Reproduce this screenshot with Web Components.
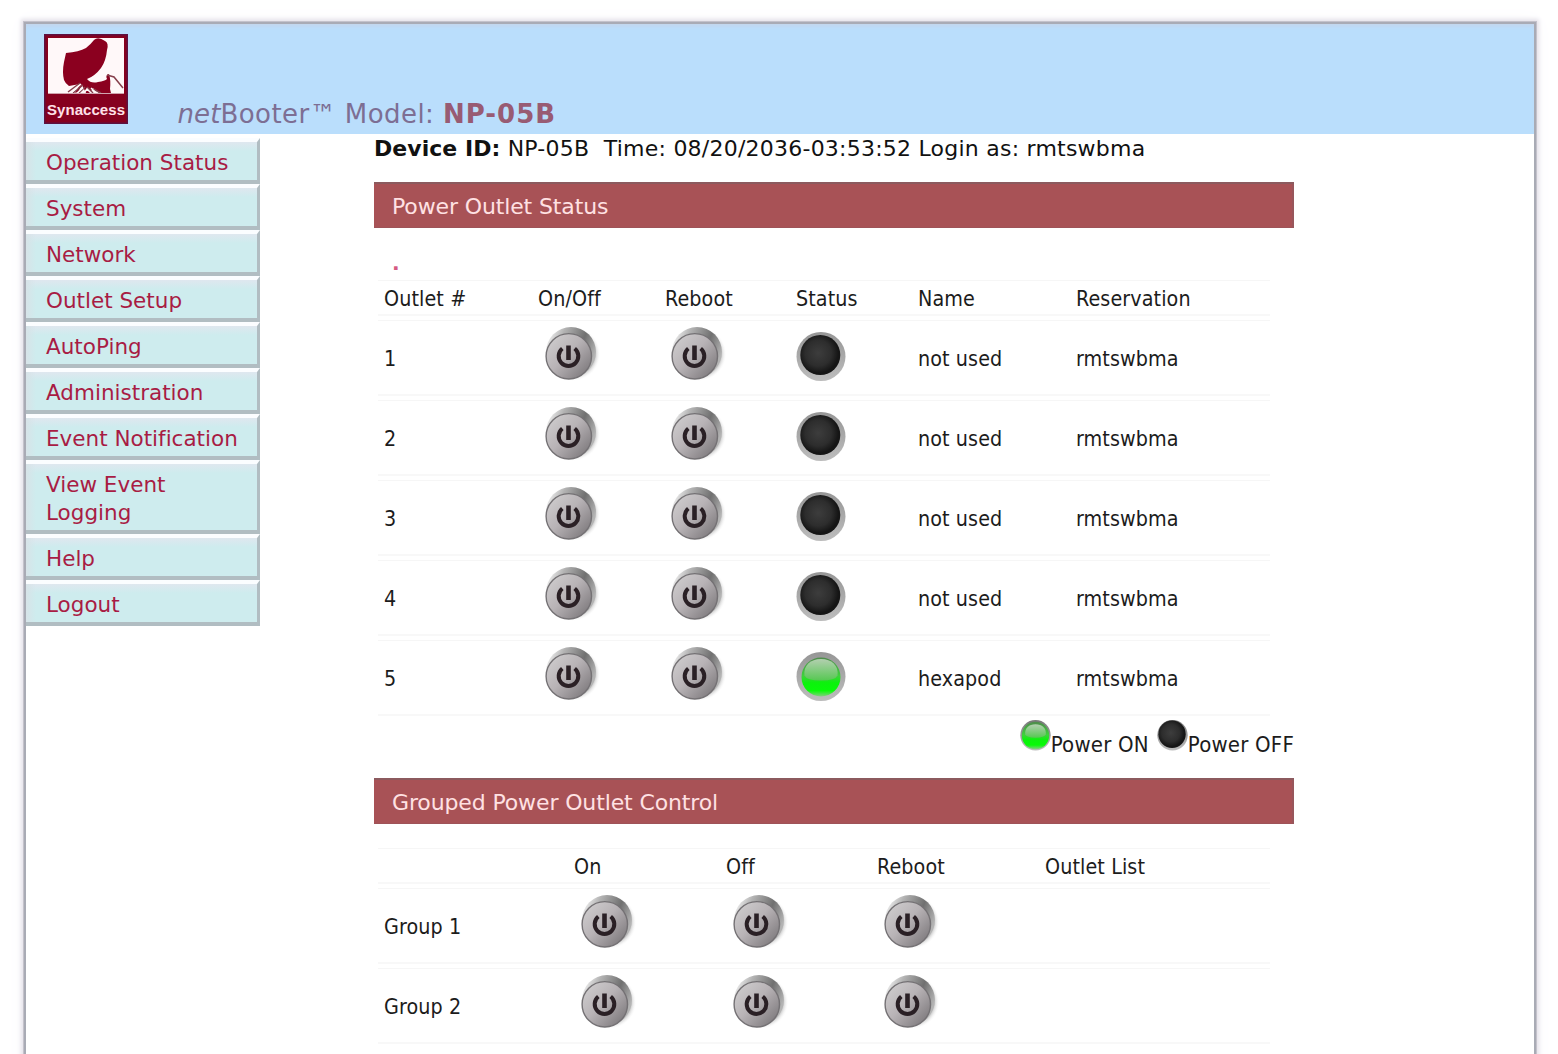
<!DOCTYPE html>
<html lang="en">
<head>
<meta charset="utf-8">
<title>netBooter</title>
<style>
html,body{margin:0;height:100%;overflow:hidden;background:#fff}
body{font-family:"DejaVu Sans",Verdana,sans-serif;color:#1c1c1c;font-size:22px;font-variant-ligatures:none}
</style>
</head>
<body>
<nb-app></nb-app>
<script>
const define=(name,html)=>customElements.define(name,class extends HTMLElement{
  constructor(){super();this.attachShadow({mode:'open'});}
  connectedCallback(){this.shadowRoot.innerHTML=typeof html==='function'?html(this):html;}
});

define('nb-logo',`<style>
:host{display:block;width:84px;height:90px}
svg{display:block}
</style>
<svg width="84" height="90" viewBox="0 0 84 90">
<rect width="84" height="90" fill="#86001f"/>
<path d="M0 0H84V90H0Z" fill="none" stroke="#5d1140" stroke-width="3"/>
<rect x="4" y="4" width="76" height="55" fill="#fff8f9"/>
<path d="M22 19Q35 18 42 14Q47 10 50 6Q54 2 61 7Q65 9 63 16Q62 27 57 34Q51 42 43 45Q47 50 54 48Q61 47 63 45Q61 41 65 40Q67 46 66 55L67 59H55L49 54L46 59H42L38 51L34 58L31 59L36 50L25 52Q21 49 20 46Q18 38 20 28Z" fill="#8b001f"/>
<path d="M24 58L36 49M29 59L39 51M35 59L41 53M43 53L49 59M49 55L57 59M63 41L70 43L79 54" fill="none" stroke="#86404d" stroke-width="1.500"/>
<path d="M27 59L37 50M33 59L39 54M40 59L43 55L47 59M52 59L47 54" fill="none" stroke="#fff8f9" stroke-width="1.500"/>
<path d="M4 59.500H80" stroke="#d0a3ae"/>
<text x="42" y="80.500" text-anchor="middle" textLength="78" lengthAdjust="spacing" font-family="Liberation Sans,Arial,sans-serif" font-weight="700" font-size="15" fill="#ffe0e8">Synaccess</text>
</svg>`);

define('nb-header',`<style>
:host{display:flex;height:110px;background:#badefc;box-sizing:border-box;padding:10px 0 0 18px;gap:49.500px;align-items:flex-start;box-shadow:inset 0 4px 4px -2px #c4d4ea}
h1{margin:64px 0 0;font-size:26px;line-height:32px;font-weight:400;color:#7d6e93;letter-spacing:.44px;white-space:pre}
b{color:#985b73;letter-spacing:1px}
i{letter-spacing:.1px}
</style><nb-logo></nb-logo><h1><i>net</i>Booter™ Model: <b>NP-05B</b></h1>`);

define('nb-menu-item',`<style>
:host{display:block;box-sizing:border-box;width:234px;padding:7px 10px 3px 20px;border-style:solid;border-width:4px 3px 4px 0;border-color:#fbfdff #b1bdc2 #b1bdc2;background:linear-gradient(90deg,#d7e3e8,transparent 10px),linear-gradient(#dfe7ef,#ceecee 9px);color:#a81c44;font-size:21.500px;line-height:28px}
</style><slot></slot>`);

define('nb-menu',`<style>:host{display:flex;flex-direction:column;width:234px;padding-top:4px}</style><slot></slot>`);

define('nb-bar',`<style>
:host{display:block;box-sizing:border-box;height:46px;padding-left:18px;line-height:50px;background:#a85256;color:#ffe1e3;font-size:22px;letter-spacing:-.13px;box-shadow:inset 0 2px #8c5a5e,inset -2px 0 #98565b,inset 0 -1px #9e5358}
</style><slot></slot>`);

define('nb-power',`<style>:host{display:block;width:56px;height:56px}svg{display:block}</style>
<svg width="56" height="56" viewBox="0 0 56 56">
<defs>
<linearGradient id="a" x1="0" y1=".1" x2="1" y2=".5"><stop offset="0" stop-color="#fff"/><stop offset=".3" stop-color="#b4b4b4"/><stop offset=".7" stop-color="#707070"/><stop offset="1" stop-color="#b4b4b4"/></linearGradient>
<linearGradient id="b" x1="0" y1=".15" x2=".8" y2=".9"><stop offset="0" stop-color="#cfcdce"/><stop offset=".5" stop-color="#b8b3b6"/><stop offset="1" stop-color="#858184"/></linearGradient>
<radialGradient id="c"><stop offset=".75" stop-color="#aaa"/><stop offset="1" stop-color="#fff" stop-opacity="0"/></radialGradient>
</defs>
<circle cx="28.500" cy="27" r="27" fill="url(#c)"/>
<circle cx="26" cy="25" r="25" fill="url(#a)"/>
<circle cx="23.800" cy="29.300" r="22.700" fill="url(#b)" stroke="#747174" stroke-width="1.400"/>
<path d="M17.300 21.500A9.800 9.800 0 1 0 29.700 21.500" fill="none" stroke="#2a2025" stroke-width="4"/>
<path d="M23.500 18.500V33" stroke="#2a2025" stroke-width="4.600"/>
</svg>`);

define('nb-led',el=>{
 const s=+(el.getAttribute('size')||50),on=el.hasAttribute('on');
 return `<style>:host{display:block;width:${s}px;height:${s}px}svg{display:block}</style>
<svg width="${s}" height="${s}" viewBox="0 0 50 50">
<defs>
<linearGradient id="r" x1="0" y1="0" x2="0" y2="1"><stop offset="0" stop-color="${s<50?'#777':'#969696'}"/><stop offset="1" stop-color="#bdbdbd"/></linearGradient>
<radialGradient id="k" cx=".45" cy=".45"><stop offset="0" stop-color="#3d3d3d"/><stop offset=".65" stop-color="#2d2d2d"/><stop offset="1" stop-color="#151515"/></radialGradient>
<linearGradient id="g" x1="0" y1="0" x2="0" y2="1"><stop offset="0" stop-color="#4f8b4c"/><stop offset=".48" stop-color="#3ed23c"/><stop offset=".65" stop-color="#0cf20c"/><stop offset=".85" stop-color="#08fa08"/><stop offset="1" stop-color="#83cf80"/></linearGradient>
<linearGradient id="h" x1="0" y1="0" x2="0" y2="1"><stop offset="0" stop-color="#b3cfb0"/><stop offset="1" stop-color="#57c853"/></linearGradient>
</defs>
<circle cx="25" cy="24.500" r="24.500" fill="url(#r)"/>
${on?`<circle cx="25" cy="25" r="${s<50?22:19.500}" fill="url(#g)"/><path d="M8.500 23.500C7 13.500 14.500 7 25 7S43 13.500 41.500 23.500Q39.500 28.500 25 28.500T8.500 23.500Z" fill="url(#h)"/>`
:`<circle cx="24.300" cy="23" r="${s<50?22:20}" fill="url(#k)"/>`}
</svg>`;});

define('nb-row',`<style>
:host{display:grid;grid-template-columns:var(--cols);width:892px;box-sizing:border-box;height:76px;border-top:1px solid #f6f6f6;border-bottom:2px solid #f8f8f8;padding-left:6px;align-items:center}
:host([head]){height:36px}
</style><slot></slot>`);

const cell=s=>`<div class="t">${s}</div>`;
const css=`<style>
:host{display:flex;flex-direction:column;gap:4px;width:896px;padding-left:4px;box-sizing:border-box;font-family:"DejaVu Sans Condensed","DejaVu Sans",sans-serif;font-stretch:condensed;font-size:21.300px;letter-spacing:.1px;color:#1c1c1c}
.t{white-space:pre;line-height:26px;padding-top:2px}
.i{align-self:start}
</style>`;
define('nb-outlets',`${css}<style>:host{--cols:154px 127px 131px 122px 158px 1fr}.p{margin:6px 0 0 7px}.l{margin:11px 0 0 0}.q{margin-left:6px}</style>
<nb-row head>${['Outlet #','On/Off','Reboot','Status','Name','Reservation'].map(cell).join('')}</nb-row>`+
[1,2,3,4,5].map(n=>`<nb-row>${cell(n)}<nb-power class="i p"></nb-power><nb-power class="i p q"></nb-power><nb-led class="i l" ${n==5?'on':''}></nb-led>${cell(n==5?'hexapod':'not used')}${cell('rmtswbma')}</nb-row>`).join(''));

define('nb-groups',`${css}<style>:host{--cols:190px 152px 151px 168px 1fr}.p{margin:6px 0 0 7px}</style>
<nb-row head>${['','On','Off','Reboot','Outlet List'].map(cell).join('')}</nb-row>`+
[1,2].map(n=>`<nb-row>${cell('Group '+n)}${'<nb-power class="i p"></nb-power>'.repeat(3)}<div></div></nb-row>`).join(''));

define('nb-legend',`<style>
:host{display:flex;justify-content:flex-end;height:62px;gap:8px;font-family:"DejaVu Sans Condensed","DejaVu Sans",sans-serif;font-stretch:condensed;font-size:22px;line-height:26px;letter-spacing:.2px}
span{display:flex}nb-led{margin-top:4px}em{font-style:normal;margin-top:16px;white-space:pre}
</style><span><nb-led size="31" on></nb-led><em>Power ON</em></span><span><nb-led size="31"></nb-led><em>Power OFF</em></span>`);

define('nb-app',`<style>
:host{display:block;box-sizing:border-box;height:1054px;padding:22px 22px 0 24px;overflow:hidden}
.frame{width:1508px;height:1100px;border:2px solid #a9abb5;box-shadow:0 0 0 1px #c4c2cb,0 0 4px 3px #e4e1e9,0 0 20px 2px #faf9fc;background:#fff}
.body{display:flex}
main{width:920px;margin-left:114px}
.device{height:48px;box-sizing:border-box;padding-top:1px;line-height:28px;white-space:pre;font-size:22px;letter-spacing:.23px;color:#111}
.device b{letter-spacing:.05px}
.note{height:52px;box-sizing:border-box;padding:21px 0 0 18px;line-height:28px;color:#d45a82;font-size:20px;font-weight:700}
.gap{height:24px}
</style>
<div class="frame"><nb-header></nb-header>
<div class="body"><nb-menu>${['Operation Status','System','Network','Outlet Setup','AutoPing','Administration','Event Notification','View Event Logging','Help','Logout'].map(t=>`<nb-menu-item>${t}</nb-menu-item>`).join('')}</nb-menu>
<main><div class="device"><b>Device ID:</b> NP-05B  Time: 08/20/2036-03:53:52 Login as: rmtswbma</div>
<nb-bar>Power Outlet Status</nb-bar>
<div class="note">.</div>
<nb-outlets></nb-outlets>
<nb-legend></nb-legend>
<nb-bar>Grouped Power Outlet Control</nb-bar>
<div class="gap"></div>
<nb-groups></nb-groups>
</main></div></div>`);
</script>
</body>
</html>
